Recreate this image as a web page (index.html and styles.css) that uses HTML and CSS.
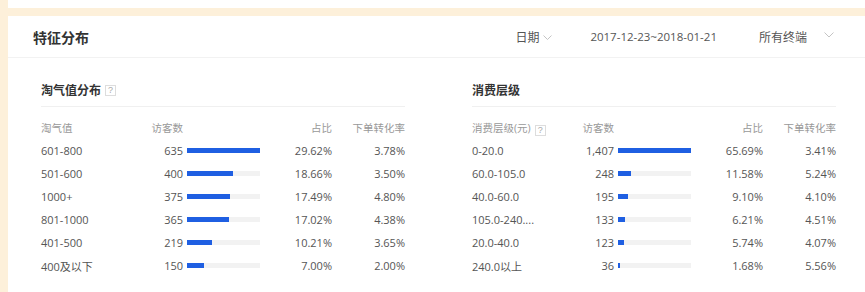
FILE: index.html
```html
<!DOCTYPE html>
<html lang="zh-CN">
<head>
<meta charset="utf-8">
<title>特征分布</title>
<link rel="stylesheet" href="styles.css">
</head>
<body>
<div class="topstrip"></div>
<div class="card">
  <div class="card-header">
    <h2 class="card-title">特征分布</h2>
    <div class="filters">
      <span class="filter-date">日期<svg class="chev" width="9" height="6" viewBox="0 0 9 6"><polyline points="0.5,0.5 4.5,4.5 8.5,0.5" fill="none" stroke="#c4c4c4" stroke-width="1"/></svg></span>
      <span class="filter-range">2017-12-23~2018-01-21</span>
      <span class="filter-term">所有终端</span>
      <svg class="chev chev-term" width="10" height="6" viewBox="0 0 10 6"><polyline points="0.5,0.5 5,5 9.5,0.5" fill="none" stroke="#c4c4c4" stroke-width="1"/></svg>
    </div>
  </div>
  <div class="card-body">
    <section class="panel">
      <div class="panel-title">淘气值分布<span class="qmark">?</span></div>
      <div class="table">
        <div class="row head"><span>淘气值</span><span class="r">访客数</span><span></span><span class="r">占比</span><span class="r">下单转化率</span></div>
        <div class="row"><span>601-800</span><span class="r">635</span><span class="barcell"><span class="track"><span class="bar" style="width:100%"></span></span></span><span class="r">29.62%</span><span class="r">3.78%</span></div>
        <div class="row"><span>501-600</span><span class="r">400</span><span class="barcell"><span class="track"><span class="bar" style="width:63%"></span></span></span><span class="r">18.66%</span><span class="r">3.50%</span></div>
        <div class="row"><span>1000+</span><span class="r">375</span><span class="barcell"><span class="track"><span class="bar" style="width:59%"></span></span></span><span class="r">17.49%</span><span class="r">4.80%</span></div>
        <div class="row"><span>801-1000</span><span class="r">365</span><span class="barcell"><span class="track"><span class="bar" style="width:57.5%"></span></span></span><span class="r">17.02%</span><span class="r">4.38%</span></div>
        <div class="row"><span>401-500</span><span class="r">219</span><span class="barcell"><span class="track"><span class="bar" style="width:34.5%"></span></span></span><span class="r">10.21%</span><span class="r">3.65%</span></div>
        <div class="row"><span>400及以下</span><span class="r">150</span><span class="barcell"><span class="track"><span class="bar" style="width:23.6%"></span></span></span><span class="r">7.00%</span><span class="r">2.00%</span></div>
      </div>
    </section>
    <section class="panel">
      <div class="panel-title">消费层级</div>
      <div class="table">
        <div class="row head"><span>消费层级(元)<span class="qmark">?</span></span><span class="r">访客数</span><span></span><span class="r">占比</span><span class="r">下单转化率</span></div>
        <div class="row"><span>0-20.0</span><span class="r">1,407</span><span class="barcell"><span class="track"><span class="bar" style="width:100%"></span></span></span><span class="r">65.69%</span><span class="r">3.41%</span></div>
        <div class="row"><span>60.0-105.0</span><span class="r">248</span><span class="barcell"><span class="track"><span class="bar" style="width:17.6%"></span></span></span><span class="r">11.58%</span><span class="r">5.24%</span></div>
        <div class="row"><span>40.0-60.0</span><span class="r">195</span><span class="barcell"><span class="track"><span class="bar" style="width:13.9%"></span></span></span><span class="r">9.10%</span><span class="r">4.10%</span></div>
        <div class="row"><span>105.0-240....</span><span class="r">133</span><span class="barcell"><span class="track"><span class="bar" style="width:9.5%"></span></span></span><span class="r">6.21%</span><span class="r">4.51%</span></div>
        <div class="row"><span>20.0-40.0</span><span class="r">123</span><span class="barcell"><span class="track"><span class="bar" style="width:8.7%"></span></span></span><span class="r">5.74%</span><span class="r">4.07%</span></div>
        <div class="row"><span>240.0以上</span><span class="r">36</span><span class="barcell"><span class="track"><span class="bar" style="width:2.6%"></span></span></span><span class="r">1.68%</span><span class="r">5.56%</span></div>
      </div>
    </section>
  </div>
</div>
</body>
</html>
```

FILE: styles.css
```css
* { box-sizing: border-box; }
html, body { margin: 0; padding: 0; }
body {
  background: #fdf0da;
  font-family: "Open Sans", "Noto Sans CJK SC", sans-serif;
  color: #555;
  overflow: hidden;
  height: 292px;
}
.topstrip {
  height: 8px;
  margin-left: 8px;
  background: #fff;
}
.card {
  margin: 8px 0 0 8px;
  background: #fff;
  height: 276px;
}
.card-header {
  height: 42px;
  border-bottom: 1px solid #f2f2f2;
  display: flex;
  align-items: center;
  padding-left: 25px;
  padding-right: 31px;
}
.card-title {
  margin: 0;
  font-family: "Noto Sans CJK SC", sans-serif;
  font-size: 14px;
  font-weight: bold;
  color: #333;
  line-height: 20px;
  padding-top: 1px;
}
.filters {
  margin-left: auto;
  display: flex;
  align-items: center;
  font-size: 12px;
  color: #555;
  line-height: 16px;
}
.filter-date {
  display: flex;
  align-items: center;
  font-family: "Noto Sans CJK SC", sans-serif;
}
.chev { display: block; }
.filter-date .chev { margin-left: 4px; margin-top: 2px; }
.filter-range { margin-left: 38px; font-size: 11.5px; color: #555; }
.filter-term { margin-left: 42px; font-family: "Noto Sans CJK SC", sans-serif; }
.chev-term { margin-left: 17px; margin-top: -3px; }
.card-body {
  display: flex;
  gap: 67px;
  padding: 22px 0 0 33px;
}
.panel { width: 364px; }
.panel-title {
  height: 27px;
  line-height: 20px;
  font-family: "Noto Sans CJK SC", sans-serif;
  font-size: 12px;
  font-weight: bold;
  color: #333;
  border-bottom: 1px solid #f0f0f0;
  display: flex;
  align-items: flex-start;
}
.qmark {
  display: inline-block;
  width: 11px;
  height: 11px;
  border: 1px solid #ddd;
  color: #aaa;
  font-size: 9px;
  line-height: 9px;
  text-align: center;
  font-weight: normal;
  margin-left: 4px;
  margin-top: 5px;
  font-family: "Liberation Sans", sans-serif;
}
.head .qmark { margin-top: 0; vertical-align: -1px; }
.table { margin-top: 9px; }
.row {
  display: grid;
  grid-template-columns: 100px 42px 77px 72px 73px;
  height: 23px;
  align-items: center;
  font-size: 11px;
  color: #555;
  white-space: nowrap;
}
.row.head {
  font-size: 10.5px;
  color: #999;
}
.r { text-align: right; }
.barcell { padding-left: 4px; display: flex; align-items: center; }
.track {
  display: block;
  width: 73px;
  height: 5px;
  background: #f2f2f2;
}
.bar {
  display: block;
  height: 5px;
  background: #1f5fe2;
}
```
